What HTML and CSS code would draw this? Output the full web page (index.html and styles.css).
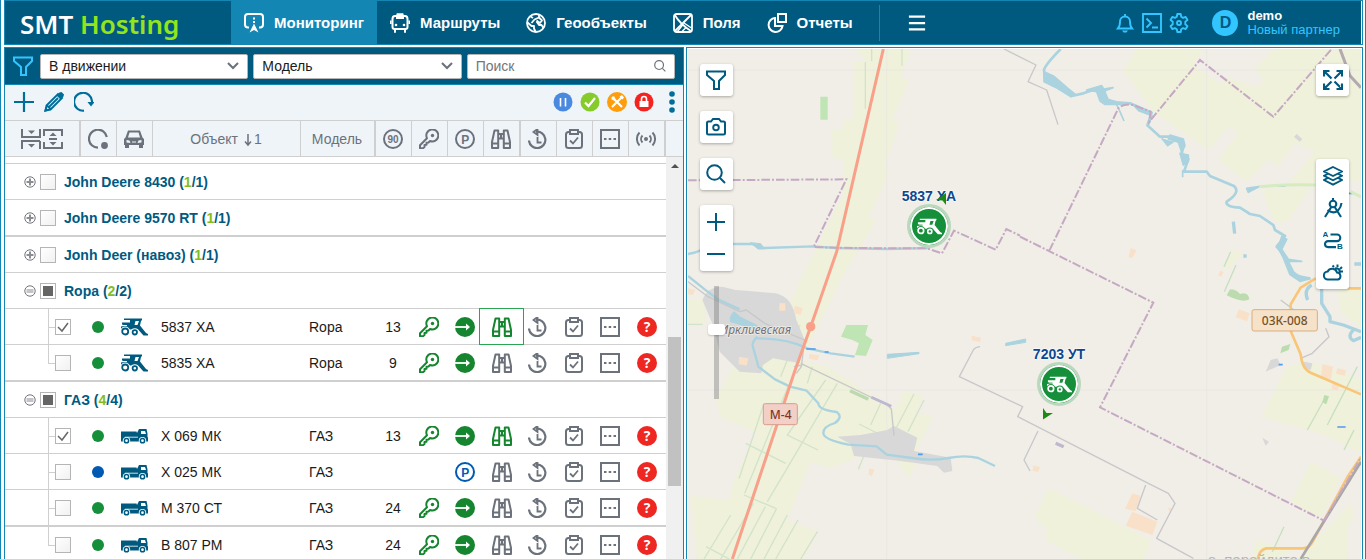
FILE: index.html
```html
<!DOCTYPE html>
<html lang="ru">
<head>
<meta charset="utf-8">
<title>SMT Hosting</title>
<link rel="stylesheet" href="styles.css">
</head>
<body>
<svg class="sprite" aria-hidden="true">
  <symbol id="i-monitor" viewBox="0 0 20 20"><path d="M5 14.500H4a3 3 0 0 1-3-3V4a3 3 0 0 1 3-3h12a3 3 0 0 1 3 3v7.500a3 3 0 0 1-3 3h-1M10 4.500v2M10 8v2" fill="none" stroke="currentColor" stroke-width="2"/><path d="M10 10.500l4.500 9-4.500-2.500-4.500 2.500z" fill="currentColor"/></symbol>
  <symbol id="i-bus" viewBox="0 0 20 20"><path d="M5 3h10q2.500 0 2.500 3v8q0 2-2 2h-11q-2 0-2-2V6q0-3 2.500-3zM7 3l.5-1.800h5L13 3v2H7zM5 16.500v2.500M15 16.500v2.500" fill="none" stroke="currentColor" stroke-width="2" stroke-linecap="round"/><path d="M.800 7.500v3.500M19.200 7.500v3.500" stroke="currentColor" stroke-width="1.600"/><circle cx="6" cy="12" r="1.300" fill="currentColor"/><circle cx="14" cy="12" r="1.300" fill="currentColor"/></symbol>
  <symbol id="i-globe" viewBox="0 0 20 20"><g fill="none" stroke="currentColor" stroke-width="1.800" stroke-linejoin="round"><circle cx="10" cy="10" r="9"/><path d="M1.500 9.500l4 3.500h2.500v2.500l1.500 3M4.500 3.500L7 5M5.500 10l3-3.500L13 4.500l3 3-2 2.500-3.500-2.500M10.500 8.500l2.500 3.500h2.500l2 3M13 1.800v3"/></g></symbol>
  <symbol id="i-field" viewBox="0 0 20 20"><g fill="none" stroke="currentColor" stroke-width="1.800"><rect x="1" y="1" width="18" height="18" rx="2.500"/><path d="M1.500 1.500q5 9 17 17M18.500 1.500l-17 17"/></g><path d="M4.500 18.500l5.500-7M11 10l7.500 5M9 18.500l4-4" stroke="currentColor" stroke-width="1.400"/></symbol>
  <symbol id="i-report" viewBox="0 0 20 20"><path d="M8 5a7 7 0 1 0 7.500 8H8zM11 1h8v8h-8z" fill="none" stroke="currentColor" stroke-width="2"/></symbol>
  <symbol id="i-menu" viewBox="0 0 20 20"><path d="M1 3h18M1 10h18M1 17h18" stroke="currentColor" stroke-width="2.500"/></symbol>
  <symbol id="i-bell" viewBox="0 0 20 20"><path d="M3 15.500q2-2 2-7a5 5 0 0 1 10 0q0 5 2 7zM10 1v2.500M2 15.500h16" fill="none" stroke="currentColor" stroke-width="1.900"/><path d="M7 17.500h6l-1.500 2h-3z" fill="currentColor"/></symbol>
  <symbol id="i-term" viewBox="0 0 20 20"><path d="M1 1h18v18H1zM4.500 5.500L9 10l-4.500 4.500M10 14.500h6" fill="none" stroke="currentColor" stroke-width="1.900"/></symbol>
  <symbol id="i-gear" viewBox="0 0 20 20"><g fill="none" stroke="currentColor" stroke-width="1.900" stroke-linejoin="round"><path d="M8.300 1h3.400l.5 2.800 1.900 1.100 2.600-1 1.800 3-2.200 1.900v2.400l2.200 1.900-1.800 3-2.600-1-1.900 1.100-.5 2.800H8.300l-.5-2.800-1.900-1.100-2.600 1-1.800-3 2.200-1.900V8.800L1.500 6.900l1.800-3 2.600 1 1.900-1.100z"/><circle cx="10" cy="10" r="2"/></g></symbol>
  <symbol id="i-funnel" viewBox="0 0 20 20"><path d="M1 1.500h18V5l-6 6v8H8v-8L1 5z" fill="none" stroke="currentColor" stroke-width="2"/></symbol>
  <symbol id="i-search" viewBox="0 0 20 20"><path d="M14 14l5 5" stroke="currentColor" stroke-width="2"/><circle cx="8.500" cy="8.500" r="7.300" fill="none" stroke="currentColor" stroke-width="2"/></symbol>
  <symbol id="i-plus" viewBox="0 0 20 20"><path d="M10 0v20M0 10h20" stroke="currentColor" stroke-width="2.200"/></symbol>
  <symbol id="i-minus" viewBox="0 0 20 20"><path d="M0 10h20" stroke="currentColor" stroke-width="2.200"/></symbol>
  <symbol id="i-pencil" viewBox="0 0 20 20"><path d="M1.500 18.500l1-5L14 2l4 4L6.500 17.500zM3 13.500l3.500 3.500M5 15L14 6" fill="none" stroke="currentColor" stroke-width="1.900"/><path d="M12.500 3.500L15.500.500l2-.5L20 2.500l-.5 2-3 3zM0 20l1.500-5L5 18.500z" fill="currentColor"/></symbol>
  <symbol id="i-refresh" viewBox="0 0 20 20"><path d="M10 18.700A9 9 0 1 1 18 9v2" fill="none" stroke="currentColor" stroke-width="2.200"/><path d="M13.500 10h7L17 14.500z" fill="currentColor"/></symbol>
  <symbol id="i-dots" viewBox="0 0 6 22"><g fill="currentColor"><circle cx="3" cy="3" r="2.800"/><circle cx="3" cy="11" r="2.800"/><circle cx="3" cy="19" r="2.800"/></g></symbol>
  <symbol id="i-tree" viewBox="0 0 42 20"><g fill="none" stroke="currentColor" stroke-width="2"><path d="M1 0v8h18V0M0 12h19M1 12v8M19 12v8M23 7V1h18v6M23 13v6h18v-6M28 10h8"/></g><path d="M7 1.500h7l-3.500 3.500zM7 15h7l-3.500 3.500zM28.500 7h7L32 3.500zM28.500 13h7L32 16.500z" fill="currentColor"/></symbol>
  <symbol id="i-state" viewBox="0 0 20 20"><path d="M10 18.700A9 9 0 1 1 18.800 8" fill="none" stroke="currentColor" stroke-width="2.200"/><circle cx="16.500" cy="16.500" r="3.400" fill="currentColor"/></symbol>
  <symbol id="i-car" viewBox="0 0 20 18"><path fill-rule="evenodd" d="M4 .500h12l2.500 7L20 9v6h-1v3h-4v-3H5v3H1v-3H0V9l1.500-1.500zM5.500 2.500L4 7.500h12l-1.500-5zM2.500 10v2.500l4 .500-1-2.500zM17.500 10l-3 .5-1 2.500 4-.5zM8 11.500v1h4v-1z" fill="currentColor"/></symbol>
  <symbol id="i-speed" viewBox="0 0 20 20"><circle cx="10" cy="10" r="9" fill="none" stroke="currentColor" stroke-width="2"/><text x="10" y="13.500" text-anchor="middle" class="glyph10" fill="currentColor">90</text></symbol>
  <symbol id="i-key" viewBox="0 0 20 20"><path d="M8 9.200A6 6 0 1 1 11 12L9.500 13.500l-2 .2v2l-2 .3v2L4 19.200H1v-3z" fill="none" stroke="currentColor" stroke-width="2" stroke-linejoin="round"/><circle cx="13.500" cy="6.500" r="1.700" fill="currentColor"/></symbol>
  <symbol id="i-park" viewBox="0 0 20 20"><circle cx="10" cy="10" r="9" fill="none" stroke="currentColor" stroke-width="2"/><text x="10.200" y="14.500" text-anchor="middle" class="glyph12" fill="currentColor">P</text></symbol>
  <symbol id="i-bino" viewBox="0 0 20 20"><path d="M1 18.700V13L3.500 1.500h3.700V19H1zm18 0V13L16.500 1.500h-3.700V19H19zM1 14.500h6M13 14.500h6M7 5h6M7 9.500h6M10 5v4.500" fill="none" stroke="currentColor" stroke-width="2" stroke-linejoin="round"/></symbol>
  <symbol id="i-history" viewBox="0 0 20 20"><path d="M8 2.800a8.200 8.200 0 1 1-7 8.700" fill="none" stroke="currentColor" stroke-width="2.200"/><path d="M9.500 0v6L5.500 3zM9.500 8v5.500h4" fill="none" stroke="currentColor" stroke-width="1.800"/></symbol>
  <symbol id="i-task" viewBox="0 0 20 20"><path d="M6 3H4.500Q2 3 2 5.500v11Q2 19 4.500 19h11q2.500 0 2.500-2.500v-11Q18 3 15.500 3H14M6 1h8v4H6z" fill="none" stroke="currentColor" stroke-width="2"/><path d="M6 11.500l3 3 5-6" fill="none" stroke="currentColor" stroke-width="1.800"/></symbol>
  <symbol id="i-more" viewBox="0 0 20 20"><path d="M1 1h18v18H1z" fill="none" stroke="currentColor" stroke-width="2"/><path d="M4 9h2.500v2H4zM8.700 9h2.500v2H8.700zM13.500 9H16v2h-2.500z" fill="currentColor"/></symbol>
  <symbol id="i-signal" viewBox="0 0 20 20"><g fill="none" stroke="currentColor" stroke-width="1.900"><path d="M6.500 6.500a5 5 0 0 0 0 7M13.500 6.500a5 5 0 0 1 0 7M3.500 3.500a9.500 9.500 0 0 0 0 13M16.500 3.500a9.500 9.500 0 0 1 0 13"/></g><circle cx="10" cy="10" r="2" fill="currentColor"/></symbol>
  <symbol id="i-go" viewBox="0 0 20 20"><circle cx="10" cy="10" r="10" fill="currentColor"/><path d="M0 10h13" stroke="#fff" stroke-width="1.800"/><path d="M11 6.500l4 3.500-4 3.500z" fill="#fff"/></symbol>
  <symbol id="i-ask" viewBox="0 0 20 20"><circle cx="10" cy="10" r="10" fill="#ee2722"/><text x="10" y="15" text-anchor="middle" class="glyph14" fill="#fff">?</text></symbol>
  <symbol id="i-combine" viewBox="0 0 27 18"><path fill="currentColor" d="M3 1V.500h18V2l-1 1-1 4.500L25 15l2 1v1.500h-4.500L18 12.500l-1-1H0V8.500L2.500 8V7L1 6.500V4.500h8V2H3z"/><path d="M1 7h7M14.500 3h3.500l-1.500 4h-3z" fill="var(--gap,#fff)"/><path d="M1 7.500h5" stroke="var(--gap,#fff)"/><circle cx="4.200" cy="13.500" r="5" fill="var(--gap,#fff)"/><circle cx="13.800" cy="14.300" r="4.100" fill="var(--gap,#fff)"/><circle cx="4.200" cy="13.500" r="3" fill="none" stroke="currentColor" stroke-width="1.800"/><circle cx="13.800" cy="14.300" r="2.200" fill="none" stroke="currentColor" stroke-width="1.800"/></symbol>
  <symbol id="i-truck" viewBox="0 0 27 15"><path fill="currentColor" d="M0 3h15.500l.5 1.500L18 .500h7.500L26.500 5v3.500l.5.500v4H0z"/><path d="M20 2.500h4l1 3h-5z" fill="var(--gap,#fff)"/><path d="M4 8.700h13" stroke="var(--gap,#fff)" stroke-width=".8"/><circle cx="5.500" cy="12.200" r="3.700" fill="var(--gap,#fff)"/><circle cx="21.500" cy="12.200" r="3.700" fill="var(--gap,#fff)"/><g fill="none" stroke="currentColor" stroke-width="1.500"><circle cx="5.500" cy="12.200" r="2.100"/><circle cx="21.500" cy="12.200" r="2.100"/></g></symbol>
  <symbol id="i-open" viewBox="0 0 12 12"><circle cx="6" cy="6" r="5.200" fill="#fff" stroke="#70747a"/><path d="M2.500 5h7M2.500 7h7" stroke="#85898e"/></symbol>
  <symbol id="i-shut" viewBox="0 0 12 12"><circle cx="6" cy="6" r="5.200" fill="#fff" stroke="#70747a"/><path d="M2.500 6h7M6 2.500v7" stroke="#8b8f94" stroke-width="2"/></symbol>
  <symbol id="i-camera" viewBox="0 0 20 20"><path d="M2.500 4.500H5L7 2h6l2 2.500h2.500q1.500 0 1.500 1.500v10q0 1.500-1.500 1.500h-15Q1 17.500 1 16V6q0-1.500 1.500-1.500z" fill="none" stroke="currentColor" stroke-width="2"/><circle cx="10" cy="10.500" r="2.800" fill="none" stroke="currentColor" stroke-width="1.900"/></symbol>
  <symbol id="i-full" viewBox="0 0 20 20"><path d="M8.500 8.500L2 2M11.500 8.500L18 2M8.500 11.500L2 18M11.500 11.500L18 18M1 6.500V1h5.500M13.500 1H19v5.500M1 13.500V19h5.500M19 13.500V19h-5.500" fill="none" stroke="currentColor" stroke-width="2.200"/></symbol>
  <symbol id="i-layers" viewBox="0 0 20 20"><path d="M10 1l9 4.500-9 4.500-9-4.500zM4.500 8L1 9.800l9 4.500 9-4.500L15.500 8M4.500 12.200L1 14l9 4.700 9-4.700-3.500-1.800" fill="none" stroke="currentColor" stroke-width="1.900"/></symbol>
  <symbol id="i-compass" viewBox="0 0 20 20"><g fill="none" stroke="currentColor" stroke-width="2.100"><circle cx="10" cy="6" r="3.300"/><path d="M10 0v3M8.300 9L2 19M11.700 9L18 19M4.500 12q6 4.500 10.500.5Q18 9.500 18.500 5"/></g></symbol>
  <symbol id="i-route" viewBox="0 0 20 20"><path d="M7.500 4.500H14a3.300 3.300 0 0 1 0 6.600H5a3 3 0 0 0 0 6h8" fill="none" stroke="currentColor" stroke-width="2.100"/><text x="2.500" y="6.500" text-anchor="middle" class="glyph8" fill="currentColor">A</text><text x="17" y="18.500" text-anchor="middle" class="glyph8" fill="currentColor">B</text></symbol>
  <symbol id="i-weather" viewBox="0 0 20 20"><path d="M5 17.500a4 4 0 0 1-.3-8 5 5 0 0 1 9.300 1 3.600 3.600 0 0 1 1 7zM12 6.500a3.500 3.500 0 0 1 4.500 4.500M14.500 5V2.500M17 7l2-2M17 9.500h3M11 5L9.500 3.500" fill="none" stroke="currentColor" stroke-width="2"/></symbol>
</svg>

<header class="topbar">
  <a class="logo" href="#">SMT <span>Hosting</span></a>
  <nav class="nav">
    <a class="nav-item active" href="#"><svg class="ico"><use href="#i-monitor"/></svg>Мониторинг</a>
    <a class="nav-item" href="#"><svg class="ico"><use href="#i-bus"/></svg>Маршруты</a>
    <a class="nav-item" href="#"><svg class="ico"><use href="#i-globe"/></svg>Геообъекты</a>
    <a class="nav-item" href="#"><svg class="ico"><use href="#i-field"/></svg>Поля</a>
    <a class="nav-item" href="#"><svg class="ico"><use href="#i-report"/></svg>Отчеты</a>
    <button class="menu-btn" aria-label="Меню"><svg><use href="#i-menu"/></svg></button>
  </nav>
  <div class="tools">
    <button aria-label="Уведомления"><svg class="ico"><use href="#i-bell"/></svg></button>
    <button aria-label="Консоль"><svg class="ico"><use href="#i-term"/></svg></button>
    <button aria-label="Настройки"><svg class="ico"><use href="#i-gear"/></svg></button>
  </div>
  <a class="user" href="#">
    <span class="avatar">D</span>
    <span class="who"><b>demo</b><span>Новый партнер</span></span>
  </a>
</header>

<main class="work">
  <section class="list">
    <div class="filters">
      <svg class="ico"><use href="#i-funnel"/></svg>
      <select class="field" aria-label="Состояние"><option>В движении</option></select>
      <select class="field" aria-label="Модель"><option>Модель</option></select>
      <label class="field search"><input type="text" placeholder="Поиск" aria-label="Поиск"><svg><use href="#i-search"/></svg></label>
    </div>
    <div class="actions">
      <button aria-label="Добавить"><svg class="ico"><use href="#i-plus"/></svg></button>
      <button aria-label="Изменить"><svg class="ico"><use href="#i-pencil"/></svg></button>
      <button aria-label="Обновить"><svg class="ico"><use href="#i-refresh"/></svg></button>
      <div class="badges">
        <button aria-label="Пауза"><svg class="badge" viewBox="0 0 20 20"><circle cx="10" cy="10" r="9.500" fill="#4a89e0"/><path d="M7.500 6v8.500M12.500 6v8.500" stroke="#fff" stroke-width="1.600"/></svg></button>
        <button aria-label="Готово"><svg class="badge" viewBox="0 0 20 20"><circle cx="10" cy="10" r="9.500" fill="#86cb29"/><path d="M5 10.500l3.500 3.500 6.500-8" fill="none" stroke="#fff" stroke-width="2.200"/></svg></button>
        <button aria-label="Ремонт"><svg class="badge" viewBox="0 0 20 20"><circle cx="10" cy="10" r="10" fill="#ff9d0a"/><path d="M5 5l10 10M15 5L5 15" stroke="#fff" stroke-width="2.200"/><path d="M4 7l3-3 1.500 3L7 8.500zM12.500 4.500l3 3 1.500-2-2-2.500z" fill="#fff"/></svg></button>
        <button aria-label="Блокировка"><svg class="badge" viewBox="0 0 20 20"><circle cx="10" cy="10" r="9.500" fill="#f4231f"/><path d="M5.500 9h9v6h-9z" fill="#fff"/><path d="M7.500 9V7a2.500 2.500 0 0 1 5 0v2" fill="none" stroke="#fff" stroke-width="1.600"/></svg></button>
      </div>
      <button aria-label="Ещё"><svg class="kebab"><use href="#i-dots"/></svg></button>
    </div>

    <table class="grid head">
      <colgroup><col class="c-tree"><col class="c-ico"><col class="c-ico"><col><col class="c-model"><col class="c-ico"><col class="c-ico"><col class="c-ico"><col class="c-wide"><col class="c-ico"><col class="c-ico"><col class="c-ico"><col class="c-wide"><col class="c-bar"></colgroup>
      <thead><tr>
        <th class="thick"><svg class="tree-ico"><use href="#i-tree"/></svg></th>
        <th><svg class="ico"><use href="#i-state"/></svg></th>
        <th><svg class="ico"><use href="#i-car"/></svg></th>
        <th>Объект <svg class="sort" viewBox="0 0 8 12"><path d="M4 0v11M1 7.500L4 11l3-3.500" fill="none" stroke="currentColor" stroke-width="1.500"/></svg>1</th>
        <th class="thick">Модель</th>
        <th><svg class="ico"><use href="#i-speed"/></svg></th>
        <th><svg class="ico"><use href="#i-key"/></svg></th>
        <th><svg class="ico"><use href="#i-park"/></svg></th>
        <th class="thick"><svg class="ico"><use href="#i-bino"/></svg></th>
        <th><svg class="ico"><use href="#i-history"/></svg></th>
        <th><svg class="ico"><use href="#i-task"/></svg></th>
        <th><svg class="ico"><use href="#i-more"/></svg></th>
        <th class="thick"><svg class="ico"><use href="#i-signal"/></svg></th>
        <th class="last"></th>
      </tr></thead>
    </table>

    <div class="scroller">
      <table class="grid rows">
        <colgroup><col class="c-tree"><col class="c-ico"><col class="c-ico"><col><col class="c-model"><col class="c-ico"><col class="c-ico"><col class="c-ico"><col class="c-wide"><col class="c-ico"><col class="c-ico"><col class="c-ico"><col class="c-wide"></colgroup>
        <tbody>
        <tr class="group first"><td colspan="13"><div><svg class="exp"><use href="#i-shut"/></svg><input type="checkbox" id="g1"><label for="g1">John Deere 8430 (<i>1</i>/1)</label></div></td></tr>
        <tr class="group line2"><td colspan="13"><div><svg class="exp"><use href="#i-shut"/></svg><input type="checkbox" id="g2"><label for="g2">John Deere 9570 RT (<i>1</i>/1)</label></div></td></tr>
        <tr class="group"><td colspan="13"><div><svg class="exp"><use href="#i-shut"/></svg><input type="checkbox" id="g3"><label for="g3">Jonh Deer (навоз) (<i>1</i>/1)</label></div></td></tr>
        <tr class="group"><td colspan="13"><div><svg class="exp"><use href="#i-open"/></svg><input type="checkbox" class="part" id="g4"><label for="g4">Ropa (<i>2</i>/2)</label></div></td></tr>
        <tr>
          <td class="branch"><input type="checkbox" id="r1" checked></td><td><span class="dot"></span></td><td><svg class="veh"><use href="#i-combine"/></svg></td><td class="txt"><label for="r1">5837 XA</label></td><td class="txt">Ropa</td><td>13</td>
          <td class="on"><svg class="ico"><use href="#i-key"/></svg></td><td class="on"><svg class="ico"><use href="#i-go"/></svg></td><td class="on pick"><svg class="ico"><use href="#i-bino"/></svg></td><td><svg class="ico"><use href="#i-history"/></svg></td><td><svg class="ico"><use href="#i-task"/></svg></td><td><svg class="ico"><use href="#i-more"/></svg></td><td><svg class="ico"><use href="#i-ask"/></svg></td>
        </tr>
        <tr class="line2">
          <td class="branch end"><input type="checkbox" id="r2"></td><td><span class="dot"></span></td><td><svg class="veh"><use href="#i-combine"/></svg></td><td class="txt"><label for="r2">5835 XA</label></td><td class="txt">Ropa</td><td>9</td>
          <td class="on"><svg class="ico"><use href="#i-key"/></svg></td><td class="on"><svg class="ico"><use href="#i-go"/></svg></td><td><svg class="ico"><use href="#i-bino"/></svg></td><td><svg class="ico"><use href="#i-history"/></svg></td><td><svg class="ico"><use href="#i-task"/></svg></td><td><svg class="ico"><use href="#i-more"/></svg></td><td><svg class="ico"><use href="#i-ask"/></svg></td>
        </tr>
        <tr class="group"><td colspan="13"><div><svg class="exp"><use href="#i-open"/></svg><input type="checkbox" class="part" id="g5"><label for="g5">ГАЗ (<i>4</i>/4)</label></div></td></tr>
        <tr>
          <td class="branch"><input type="checkbox" id="r3" checked></td><td><span class="dot"></span></td><td><svg class="veh"><use href="#i-truck"/></svg></td><td class="txt"><label for="r3">Х 069 МК</label></td><td class="txt">ГАЗ</td><td>13</td>
          <td class="on"><svg class="ico"><use href="#i-key"/></svg></td><td class="on"><svg class="ico"><use href="#i-go"/></svg></td><td class="on"><svg class="ico"><use href="#i-bino"/></svg></td><td><svg class="ico"><use href="#i-history"/></svg></td><td><svg class="ico"><use href="#i-task"/></svg></td><td><svg class="ico"><use href="#i-more"/></svg></td><td><svg class="ico"><use href="#i-ask"/></svg></td>
        </tr>
        <tr>
          <td class="branch"><input type="checkbox" id="r4"></td><td><span class="dot blue"></span></td><td><svg class="veh"><use href="#i-truck"/></svg></td><td class="txt"><label for="r4">Х 025 МК</label></td><td class="txt">ГАЗ</td><td></td>
          <td></td><td class="parked"><svg class="ico"><use href="#i-park"/></svg></td><td><svg class="ico"><use href="#i-bino"/></svg></td><td><svg class="ico"><use href="#i-history"/></svg></td><td><svg class="ico"><use href="#i-task"/></svg></td><td><svg class="ico"><use href="#i-more"/></svg></td><td><svg class="ico"><use href="#i-ask"/></svg></td>
        </tr>
        <tr class="line2">
          <td class="branch"><input type="checkbox" id="r5"></td><td><span class="dot"></span></td><td><svg class="veh"><use href="#i-truck"/></svg></td><td class="txt"><label for="r5">М 370 СТ</label></td><td class="txt">ГАЗ</td><td>24</td>
          <td class="on"><svg class="ico"><use href="#i-key"/></svg></td><td class="on"><svg class="ico"><use href="#i-go"/></svg></td><td><svg class="ico"><use href="#i-bino"/></svg></td><td><svg class="ico"><use href="#i-history"/></svg></td><td><svg class="ico"><use href="#i-task"/></svg></td><td><svg class="ico"><use href="#i-more"/></svg></td><td><svg class="ico"><use href="#i-ask"/></svg></td>
        </tr>
        <tr>
          <td class="branch end"><input type="checkbox" id="r6"></td><td><span class="dot"></span></td><td><svg class="veh"><use href="#i-truck"/></svg></td><td class="txt"><label for="r6">В 807 РМ</label></td><td class="txt">ГАЗ</td><td>24</td>
          <td class="on"><svg class="ico"><use href="#i-key"/></svg></td><td class="on"><svg class="ico"><use href="#i-go"/></svg></td><td><svg class="ico"><use href="#i-bino"/></svg></td><td><svg class="ico"><use href="#i-history"/></svg></td><td><svg class="ico"><use href="#i-task"/></svg></td><td><svg class="ico"><use href="#i-more"/></svg></td><td><svg class="ico"><use href="#i-ask"/></svg></td>
        </tr>
        </tbody>
      </table>
      <div class="bar"><span class="up"></span><span class="thumb"></span></div>
    </div>
  </section>

  <section class="map">
    <svg class="canvas" viewBox="12 27 2019 1530" preserveAspectRatio="xMinYMin slice" aria-hidden="true">
      <rect x="12" y="27" width="2019" height="1530" fill="#f1eee8"/>
      <g fill="#eff1da">
        <path d="M515 27h165l-30 80 25 20-50 110 20 12-40 130 10 20-60 130 20 15-90 150-100 200-30 60-20-60-40-55 60-130 75-150 45-90 5-110-35-5 0-85h33V240h32V66h40z"/>
        <path d="M12 780h50v70H12zM95 1075l70-125 100-10 165 40 220 140 100 5-70 140-120-30-120 50-60-20-60 150-45 95-70-15-105-10 60-190 60-115-110-50z"/>
        <path d="M20 1368l90 10 80 10 120 55 90 30-40 84H40z"/>
        <path d="M660 1050l60 20-60 120-55-20zM630 1255l60 0 10 10-25 50z"/>
        <path d="M1358 27L1316 90 1408 215 1573 330 1633 262 1663 275 1605 360 1688 425 1753 358 1783 378 1833 310 1893 335 1813 430 2031 425V27z"/>
        <path d="M1735 450l145-10-70 105-40 0zM1650 630l30 5-50 55-15-5zM1960 740h71v120l-60-40z"/>
        <path d="M1810 980l60-15 161 50V1240l-120-60-180-50zM1880 1265l90 50-60 120-90-50zM2001 1390l10 40-20 30 0 97h-150zM1095 1345L1052 1430 1090 1470 1085 1500 1190 1557H1380L1400 1500zM1715 1500l110 30-50 27-70 0z"/>
      </g>
      <path d="M1560 27l-35 50 85 55 20-20 90 30 20-20-30-35 60-60z" fill="#f1eee8"/>
      <g fill="none" stroke="#e8e6e2" stroke-width="2"><path d="M12 90h2019M608 27v1530M1568 27v1530M12 1050h2019"/></g>
      <g fill="#bfe5b5"><path d="M409 170h22v69h-22zM487 855h65l-8 30 22 15-20 48-33-3 12-35-20-10-34-10z"/><path d="M330 855h20l-5 20h-20z" fill="#dcedc4"/></g>
      <g fill="none" stroke="#d2e3c9" stroke-width="4"><path d="M544 66v140M563 27v36M654 27v50M12 853h44M240 1090L165 1316M312 1040L182 1360M425 1020L310 1185 402 1230M460 1030L250 1385M185 1210l120 60M140 1425L60 1557M208 1390L110 1557M244 1400L160 1557M278 1405L200 1557M310 1425L240 1557M342 1440L275 1557M400 1475L350 1557M180 1365l95 40M66 1520l70 37M690 1062l-55 105M720 1080l-48 95M550 1223l-27 65M525 1152l60 30M310 960l-20 50M385 980l-15 50M590 1090l-30 65"/><path d="M1640 635l-20 45M1656 675l-35 80M2020 980L1930 1155M1920 1080L1870 1170M1800 1460l-35 75M2010 1170l-30 60" stroke="#c6e0bf"/></g>
      <g fill="#d8d8d8"><path d="M55 780q15-40 60-40l40 10 120 10q50 10 62 80l25 60-15 70-80-15-30 20-5 25-65-5-60-60-20-80z"/><path d="M460 1190l70-5 80-15 20-12 70 35-10 40 110 20 5 40-25 5-20-20-110-15-140-15-10-35z"/><path d="M1838 282l17 15-8 8-17-14zM1760 960l20-5 10 20-45 20zM1860 965l25 5-5 20-22-5zM1735 1193l20 12-10 12z"/></g>
      <g fill="#f8e1c8"><path d="M286 790h18v22h-18zM332 797l25 8-8 20-18-6zM165 950l28 5-5 22-24-5zM376 942l30 4-5 15-26-5zM12 745l22 5-8 15-14-2zM863 887l28 6-3 14-25-6zM557 1285l14 4-8 20-10-6zM1340 625l18 6-14 24-10-4zM1609 692l10 4-8 14-8-4zM1665 808l32 12-8 24-34-12zM1915 972l32 8-6 38-30-8zM1960 985l26 6-4 16-26-6zM1945 1030l22 4-6 18-18-4zM1048 1276l20 6-6 14-16-4zM1345 1360l25 8-15 46-32-8zM1345 1415l75 30-15 40-80-28zM1450 1402l14 4-6 10z"/></g>
      <g fill="#bcdcb0"><path d="M1638 748q20 0 30 14 25-8 28 16-20 12-68-12zM1794 920l25-8-5 18-25 10zM1921 1065l14 4-8 24-12-6z"/></g>
      <g fill="none" stroke="#c8c7c9" stroke-width="4" stroke-linejoin="round">
        <path d="M12 725l60 45 95 45 20-5 55 40 120 50-10 80-15 20M350 970l260 125 12 12 8 80M355 975l-25 5M960 27l96 48-24 50 56 25 34 104M888 920q-15 2-20 10l-42 80 190 90-15 30 392 200 60 30 20 30-55 105 110 60M1062 1173l-42 87 18 33M1385 1335l-25 70 60 35"/>
        <path d="M1925 865l10 25-50 50-35 15M1790 780l40 30"/>
      </g>
      <path d="M562 1072l60 27" stroke="#bdb7cf" stroke-width="8"/><path d="M498 1052l55 26" stroke="#bcd9b0" stroke-width="10"/><path d="M1115 1210l24 10" stroke="#bdb7cf" stroke-width="10"/>
      <g fill="none" stroke="#aad3df" stroke-width="7" stroke-linejoin="round">
        <path d="M12 642q40-5 60-30h130l40 12 145-5 70 5 150 3 130-3M12 708l50 40 40 30 65 30M220 890q-20 20-12 35l10 35 5 20 50 38 45 22 50 12 35 38q0 20 55 26 20 15-5 33-35 10-35 30t75 35l85 5 30 25 75 10q60 10 110 0t90 0l50 24M220 895q90 0 150 30l70 15 72 10"/>
        <path d="M150 815q-15 15-10 30l60 18 20-6-50-25zM200 608l30 3 12 16-20 0zM610 943l95-6v4l-95 14zM965 910l60-13v10l-60 10z" fill="#aad3df" stroke-width="3"/>
      </g>
      <g transform="translate(1008 0)" fill="none" stroke="#aad3df" stroke-width="8" stroke-linejoin="round">
        <path d="M122 27Q75 75 72 90L75 120 110 140 155 168 190 160 220 150 240 155 255 185 330 190 395 218 382 256 420 290 450 290 490 310 485 345 505 357 492 395 560 395 570 408 640 437Q665 455 620 485 615 500 660 503L690 522 720 528 760 555 765 570 795 588 770 620 800 655 810 690 840 712 870 715"/>
        <path d="M72 95v30l40 20 40 25 15-6-25-20-40-35zM200 150l30 5 10 28 14 10 60 0-50-15-10-25 25-10-28 4-6-10zM290 195l10 20 12 28M340 195l50 20v30l-6 12 12-30-40-15zM450 285l40 12 5 20-10 20-10-30-30-10zM425 295l18 22 18-12M488 390v22M480 340l25 5 0 20-15 10zM680 445l40-6-35 18zM785 590l15 8-15 30 20 30 40 6-40 0 20 40 45 12-30 8-30-20-20-50-15-30z" fill="#aad3df" stroke-width="5"/>
        <path d="M640 545l4 36M875 735q-25 15-12 45M905 740l0 50 25 40 0 15 40 10 53 20M1000 870q-20 20 0 32l23-10M1003 672h20M670 648h10" stroke-width="10"/>
      </g>
      <g stroke="#4c9cf0" stroke-width="5"><path d="M367 927h28M422 936h12M702 1243h14M1778 437h26M1995 460h12M1960 1161h25M1784 974h12"/></g>
      <path d="M1725 440q90-8 170-5M2000 455l31 16" fill="none" stroke="#d5ecbe" stroke-width="9"/>
      <path d="M598 27L512 400 458 635 380 860 330 1000 145 1557" fill="none" stroke="#f8a08a" stroke-width="9"/>
      <circle cx="380" cy="860" r="14" fill="#f8a08a"/>
      <g fill="none" stroke="#f9c577" stroke-width="8"><path d="M1895 715l-45 28-30 50 0 80 30 70q5 45 30 55l151 65M1990 745h41M2031 1250l-40 60-105 195q-10 20-30 20l-110 0q-20 5-25 32"/></g>
      <path d="M2031 1265L1850 1557" stroke="#a9a6a8" stroke-width="8"/><path d="M1968 27l30 80 33 36" fill="none" stroke="#b3a9b0" stroke-width="9"/>
      <g fill="none" stroke="#c5a9c2" stroke-width="6" stroke-dasharray="26 6 6 6"><path d="M12 421l475-3-98 203q90 4 340 4l45 15 36-68 125 57 32-62 41 20"/><path d="M1008 590l400 198-160 314 672 340M1096 632l207-427q15-15 45-10l52 20-4 30 152-185 220 170 175-203M1920 1442l111-190"/></g>
      <text x="108" y="882" class="town">Ирклиевская</text>
      <rect x="238" y="1091" width="102" height="63" rx="6" fill="#f2cfc7" stroke="#d99c8e" stroke-width="3"/>
      <text x="290" y="1137" class="shield" fill="#7d3729" text-anchor="middle">М-4</text>
      <rect x="1704" y="809" width="196" height="64" rx="6" fill="#f6e2c9" stroke="#d8ae80" stroke-width="3"/>
      <text x="1802" y="854" class="shield" fill="#72532b" text-anchor="middle">03К-008</text>
      <text x="1573" y="1575" class="credit">s, перейдите в</text>
    </svg>

    <div class="controls left">
      <button aria-label="Фильтр"><svg class="ico"><use href="#i-funnel"/></svg></button>
      <button aria-label="Снимок"><svg class="ico"><use href="#i-camera"/></svg></button>
      <button aria-label="Поиск на карте"><svg class="ico"><use href="#i-search"/></svg></button>
      <div class="stack"><button aria-label="Приблизить"><svg class="sm"><use href="#i-plus"/></svg></button><button aria-label="Отдалить"><svg class="sm"><use href="#i-minus"/></svg></button></div>
      <input class="zoom" type="range" aria-label="Масштаб" min="0" max="100" value="63">
    </div>
    <div class="controls right">
      <button aria-label="Во весь экран"><svg class="ico"><use href="#i-full"/></svg></button>
      <div class="stack tall">
        <button aria-label="Слои"><svg class="ico"><use href="#i-layers"/></svg></button>
        <button aria-label="Измерения"><svg class="ico"><use href="#i-compass"/></svg></button>
        <button aria-label="Маршрут"><svg class="ico"><use href="#i-route"/></svg></button>
        <button aria-label="Погода"><svg class="ico"><use href="#i-weather"/></svg></button>
      </div>
    </div>

    <div class="pin pin-a"><span>5837 XA</span><div class="disc"><svg class="veh"><use href="#i-combine"/></svg></div><svg class="dir" viewBox="0 0 12 12"><path d="M0 7L10 0V12L6.500 7.500z" fill="#1c8a12"/></svg></div>
    <div class="pin pin-b"><span>7203 УТ</span><div class="disc"><svg class="veh"><use href="#i-combine"/></svg></div><svg class="dir" viewBox="0 0 12 12"><path d="M1 0L4.500 5H11L1 11.500z" fill="#1c8a12"/></svg></div>
  </section>
</main>
</body>
</html>
```
FILE: styles.css
```css
* { box-sizing: border-box; }
:root { --deep: #005a7f; --edge: #1486b4; --sky: #33c5ff; --grey: #6c727b; --line: #cfcfcf; --pale: #eef4f8; }
html { height: 100%; }
body {
  margin: 0; height: 100%; padding: 0 2px 0 3px; overflow: hidden;
  display: flex; flex-direction: column; gap: 2px;
  border: solid var(--edge); border-width: 0 1px;
  background: #fff; color: #1b1b1b;
  font: 14px/18px "Liberation Sans", Arial, sans-serif;
}
a { color: inherit; text-decoration: none; }
button { border: 0; padding: 0; background: none; color: inherit; font: inherit; display: flex; align-items: center; justify-content: center; }
svg { display: block; flex: none; overflow: visible; }
.sprite { display: none; }
.ico { width: 20px; height: 20px; }
.glyph8 { font: bold 8px "Liberation Sans", sans-serif; }
.glyph10 { font: bold 10px "Liberation Sans", sans-serif; }
.glyph12 { font: bold 12px "Liberation Sans", sans-serif; }
.glyph14 { font: bold 14px "Open Sans", sans-serif; }

/* Top bar */
.topbar {
  flex: none; height: 45px; display: flex; align-items: stretch;
  border: 1px solid var(--edge); padding-right: 1px;
  background: var(--deep) content-box; color: #fff;
}
.logo { width: 226px; padding-left: 15px; font: 600 26px/46px "Noto Sans", "Open Sans", sans-serif; white-space: nowrap; }
.logo span { color: #94e41c; }
.nav { display: flex; font-size: 15px; }
.nav-item { display: flex; align-items: center; gap: 10px; padding: 0 13px; font-weight: bold; }
.nav-item.active { background: var(--edge); }
.menu-btn { margin: 4px 0 3px 13px; padding-left: 28px; border-left: 1px solid var(--edge); }
.menu-btn svg { width: 18px; height: 18px; }
.tools { margin-left: auto; display: flex; gap: 7px; color: var(--sky); }
.user { display: flex; align-items: center; gap: 9px; margin: 0 21px 0 23px; font-size: 13px; line-height: 14px; color: var(--sky); }
.avatar { width: 26px; height: 26px; border-radius: 50%; background: var(--sky); color: var(--deep); font: bold 16px/26px "Liberation Sans", sans-serif; text-align: center; }
.who { display: flex; flex-direction: column; }
.who b { color: #fff; }

/* Work area */
.work { flex: 1; min-height: 0; display: grid; grid-template-columns: 680px 1fr; gap: 2px; }
.list { display: flex; flex-direction: column; min-height: 0; border: solid var(--edge); border-width: 1px 1px 0; }
.filters { flex: none; height: 37px; display: grid; grid-template-columns: 22px repeat(3, minmax(0, 1fr)); gap: 5px; align-items: center; padding: 0 8px; background: var(--deep); border-bottom: 1px solid var(--edge); color: var(--sky); }
.field { width: 100%; height: 25px; border: 1px solid #b5b5b5; border-radius: 2px; background: #fff; color: #1b1b1b; font: 14px "Liberation Sans", sans-serif; }
select.field {
  appearance: none; padding: 0 8px;
  background: #fff url("data:image/svg+xml,%3Csvg xmlns='http://www.w3.org/2000/svg' width='12' height='8'%3E%3Cpath d='M1 1l5 5 5-5' fill='none' stroke='%236c727b' stroke-width='2'/%3E%3C/svg%3E") no-repeat right 8px center;
}
.search { display: flex; align-items: center; padding: 0 8px; }
.search input { flex: 1; min-width: 0; border: 0; padding: 0; outline: 0; font: inherit; }
.search input::placeholder { color: #757575; }
.search svg { width: 12px; height: 12px; color: var(--grey); }
.actions { flex: none; height: 36px; display: flex; align-items: center; gap: 10px; padding: 0 8px 2px 9px; background: var(--pale); border-bottom: 1px solid var(--line); color: #006e9b; }
.badges { margin-left: auto; margin-right: 5px; display: flex; gap: 7px; }
.badge { width: 20px; height: 20px; }
.kebab { width: 6px; height: 22px; }

/* Object table */
.grid { width: 100%; table-layout: fixed; border-collapse: separate; border-spacing: 0; }
.c-tree { width: 76px; }
.c-ico { width: 36px; }
.c-model { width: 75px; }
.c-wide { width: 37px; }
.c-bar { width: 17px; }
.head th { height: 36px; padding: 0 1px 0 0; background: var(--pale); border: solid var(--line); border-width: 0 1px 1px 0; color: var(--grey); font-weight: normal; }
.head th.thick { border-right-width: 2px; }
.head th.last { border-right: 0; }
.head th svg { margin: 0 auto; }
.head .tree-ico { width: 42px; height: 20px; }
.head .sort { display: inline-block; width: 8px; height: 12px; margin: 0 2px; vertical-align: -2px; }
.scroller { flex: 1; min-height: 0; overflow: hidden; display: flex; align-items: flex-start; }
.rows { flex: 1; width: auto; min-width: 0; margin-top: 6px; border-top: 1px solid var(--line); }
.rows td { height: 36px; padding: 0 2px 0 0; border-bottom: 1px solid var(--line); text-align: center; color: var(--grey); }
.rows td:nth-child(6) { color: #1b1b1b; }
.rows .line2 td { height: 37px; border-bottom-width: 2px; }
.rows td svg { margin: 0 auto; }
.rows td.txt { padding-left: 8px; text-align: left; color: #1b1b1b; }
.rows td.on { color: #16852f; }
.rows td.pick { position: relative; }
.rows td.pick::after { content: ""; position: absolute; inset: -1px -3px -1px -5px; border: 1px solid #2aa653; }
.rows td.parked { color: #0059b3; }
.group div { display: flex; align-items: center; padding-left: 19px; }
.rows .group .exp { width: 12px; height: 12px; margin: 0 4px 0 0; }
.group label { margin-left: 8px; font-weight: bold; color: var(--deep); }
.group i { font-style: normal; color: #83bd1c; }
.rows input { appearance: none; display: block; width: 16px; height: 16px; margin: 0; border: 1px solid #b5b5b5; background: linear-gradient(135deg, #fff, #f1f1f1); }
.rows input:checked { background: url("data:image/svg+xml,%3Csvg xmlns='http://www.w3.org/2000/svg' width='14' height='14'%3E%3Cpath d='M2 7l4 4 6-8' fill='none' stroke='%23666' stroke-width='1.500'/%3E%3C/svg%3E"); }
.rows input.part { background: linear-gradient(#666, #666) center / 10px 10px no-repeat; }
.rows .branch {
  padding-left: 50px;
  background: linear-gradient(var(--line), var(--line)) 43px 0 / 1px 100% no-repeat border-box, linear-gradient(var(--line), var(--line)) 43px 18px / 8px 1px no-repeat;
}
.rows .branch.end { background-size: 1px 18px, 8px 1px; }
.dot { display: block; width: 12px; height: 12px; margin: 0 auto; border-radius: 50%; background: #158f3a; }
.dot.blue { background: #0059b3; }
.veh { width: 27px; height: 18px; color: var(--deep); }
.bar { width: 17px; align-self: stretch; display: flex; flex-direction: column; align-items: center; background: #f0f0f0; }
.up { margin-top: 7px; border: 4px solid transparent; border-top: 0; border-bottom-color: #505050; }
.thumb { width: 13px; height: 149px; margin-top: 169px; background: #c1c1c1; }

/* Map */
.map { position: relative; min-width: 0; overflow: hidden; border: solid var(--edge); border-width: 1px 1px 0; padding: 1px 1px 0; }
.canvas { width: 100%; height: 100%; overflow: hidden; }
.town { font: italic 36px "Noto Sans", sans-serif; fill: #70737a; stroke: #f1eee8; stroke-width: 4px; paint-order: stroke; }
.shield { font: 500 36px "Noto Sans", sans-serif; }
.credit { font: 45px "Liberation Sans", sans-serif; fill: #b5b5b5; }
.controls { position: absolute; top: 16px; display: flex; flex-direction: column; gap: 15px; color: var(--deep); }
.controls.left { left: 13px; }
.controls.right { right: 13px; gap: 63px; }
.controls button { width: 33px; height: 32px; border-radius: 3px; background: #fff; }
.controls.left button { padding-right: 1px; }
.controls > button, .stack { box-shadow: 0 1px 3px rgba(0, 0, 0, .3); }
.stack { border-radius: 3px; background: #fff; padding: 1px 0; }
.sm { width: 18px; height: 18px; }
.zoom { appearance: none; align-self: center; writing-mode: vertical-lr; direction: rtl; width: 16px; height: 113px; margin: 0; background: linear-gradient(rgba(120, 120, 120, .4), rgba(120, 120, 120, .4)) center / 5px 100% no-repeat; }
.zoom::-webkit-slider-thumb { appearance: none; width: 17px; height: 11px; border-radius: 3px; background: #fff; box-shadow: 0 1px 2px rgba(0, 0, 0, .2); }
.pin { position: absolute; width: 60px; display: flex; flex-direction: column; align-items: center; }
.pin span { font-weight: bold; line-height: 16px; color: #0b4890; white-space: nowrap; text-shadow: 0 0 2px #fff, 0 0 2px #fff, 0 0 2px #fff; }
.disc { --gap: #158f3a; width: 44px; height: 44px; display: flex; align-items: center; justify-content: center; border: 3px solid #b9d8bd; border-radius: 50%; background: var(--gap); box-shadow: inset 0 0 0 2px #fff; }
.disc .veh { color: #fff; width: 25px; height: 17px; }
.dir { position: absolute; width: 12px; height: 12px; }
.pin-a { left: 212px; top: 140px; }
.pin-a .dir { left: 37px; top: 5px; }
.pin-b { left: 342px; top: 298px; }
.pin-b .dir { left: 13px; top: 62px; }
```
